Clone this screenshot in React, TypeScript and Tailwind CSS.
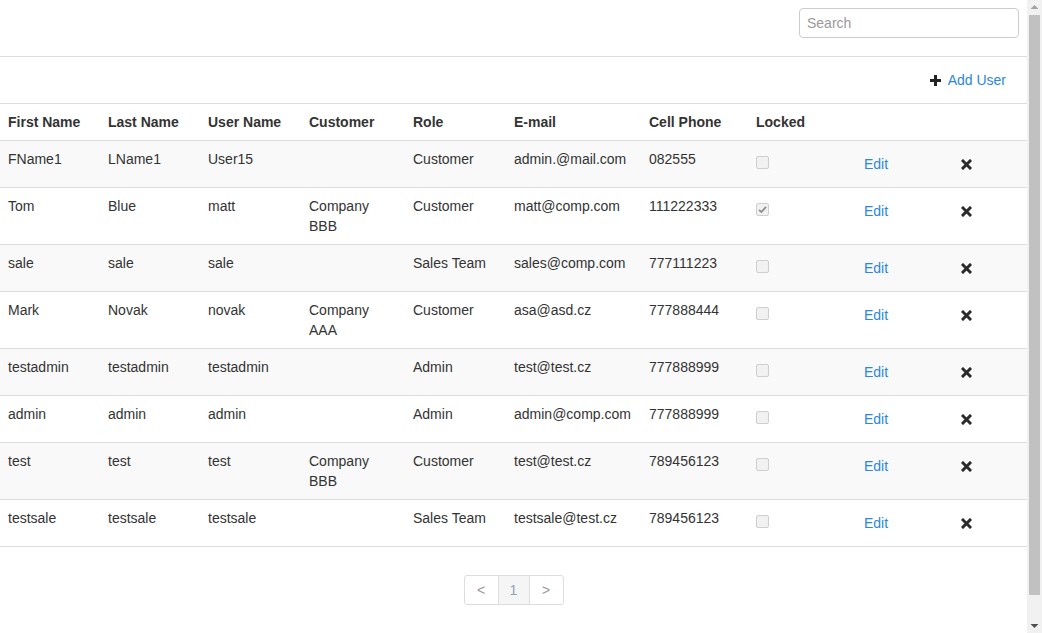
import React from "react";

type User = {
  first: string;
  last: string;
  user: string;
  customer: string;
  role: string;
  email: string;
  phone: string;
  locked: boolean;
};

const users: User[] = [
  { first: "FName1", last: "LName1", user: "User15", customer: "", role: "Customer", email: "admin.@mail.com", phone: "082555", locked: false },
  { first: "Tom", last: "Blue", user: "matt", customer: "Company BBB", role: "Customer", email: "matt@comp.com", phone: "111222333", locked: true },
  { first: "sale", last: "sale", user: "sale", customer: "", role: "Sales Team", email: "sales@comp.com", phone: "777111223", locked: false },
  { first: "Mark", last: "Novak", user: "novak", customer: "Company AAA", role: "Customer", email: "asa@asd.cz", phone: "777888444", locked: false },
  { first: "testadmin", last: "testadmin", user: "testadmin", customer: "", role: "Admin", email: "test@test.cz", phone: "777888999", locked: false },
  { first: "admin", last: "admin", user: "admin", customer: "", role: "Admin", email: "admin@comp.com", phone: "777888999", locked: false },
  { first: "test", last: "test", user: "test", customer: "Company BBB", role: "Customer", email: "test@test.cz", phone: "789456123", locked: false },
  { first: "testsale", last: "testsale", user: "testsale", customer: "", role: "Sales Team", email: "testsale@test.cz", phone: "789456123", locked: false },
];

const headers = ["First Name", "Last Name", "User Name", "Customer", "Role", "E-mail", "Cell Phone", "Locked", "", ""];

// Heavy "plus" like the old glyphicon
const PlusIcon = () => (
  <svg width="11" height="11" viewBox="0 0 11 11" className="block">
    <path d="M4 0h3v4h4v3H7v4H4V7H0V4h4z" fill="#222" />
  </svg>
);

// Heavy "remove" cross
const RemoveIcon = () => (
  <svg width="11" height="11" viewBox="0 0 11 11" className="block">
    <path d="M2 2L9 9M9 2L2 9" stroke="#2a2a2a" strokeWidth="3" strokeLinecap="square" />
  </svg>
);

const Checkbox = ({ checked }: { checked: boolean }) => (
  <span className="mt-[7px] flex h-[13px] w-[13px] items-center justify-center rounded-[2px] border border-[#cfcfcf] bg-[#f1f1f1]">
    {checked && (
      <svg width="9" height="9" viewBox="0 0 9 9">
        <path d="M1 4.8L3.4 7L8 1.8" stroke="#8c8c8c" strokeWidth="1.8" fill="none" />
      </svg>
    )}
  </span>
);

// Classic browser scrollbar drawn beside the page
const Scrollbar = () => (
  <div className="flex h-full w-[15px] shrink-0 flex-col items-center bg-[#f1f1f1]">
    <svg width="15" height="14" viewBox="0 0 15 14" className="block shrink-0">
      <path d="M3.5 9L7.5 5L11.5 9z" fill="#a3a3a3" />
    </svg>
    <div className="mt-[1px] h-[580px] w-[11px] bg-[#c1c1c1]" />
    <div className="flex-1" />
    <svg width="15" height="14" viewBox="0 0 15 14" className="block shrink-0">
      <path d="M3.5 5L7.5 9L11.5 5z" fill="#505050" />
    </svg>
  </div>
);

export default function App() {
  return (
    <div className="flex h-[633px] w-full overflow-hidden bg-white font-['Liberation_Sans',Arial,sans-serif] text-[14px] leading-[20px] text-[#333]">
      <div className="min-w-0 flex-1 pb-[53px]">
        {/* Top bar with search */}
        <div className="flex h-[57px] justify-end border-b border-[#ddd] pr-2 pt-2">
          <input
            type="text"
            placeholder="Search"
            className="h-[30px] w-[220px] rounded-[4px] border border-[#ccc] px-[7px] text-[14px] text-[#555] outline-none placeholder:text-[#999]"
          />
        </div>

        {/* Toolbar */}
        <div className="flex h-[46px] items-center justify-end pr-[21px]">
          <button className="flex items-center gap-[7px] text-[#2b88d9]">
            <PlusIcon />
            <span>Add User</span>
          </button>
        </div>

        {/* Users table */}
        <table className="w-full table-fixed border-collapse border-b border-[#ddd]">
          <colgroup>
            <col className="w-[100px]" />
            <col className="w-[100px]" />
            <col className="w-[101px]" />
            <col className="w-[104px]" />
            <col className="w-[101px]" />
            <col className="w-[135px]" />
            <col className="w-[107px]" />
            <col className="w-[98px]" />
            <col className="w-[95px]" />
            <col />
          </colgroup>
          <thead>
            <tr>
              {headers.map((h, i) => (
                <th key={i} className="border-t border-[#ddd] p-2 text-left align-top font-bold">
                  {h}
                </th>
              ))}
            </tr>
          </thead>
          <tbody>
            {users.map((u, i) => (
              <tr key={i} className={i % 2 === 0 ? "bg-[#f9f9f9]" : "bg-white"}>
                <td className="border-t border-[#ddd] p-2 align-top">{u.first}</td>
                <td className="border-t border-[#ddd] p-2 align-top">{u.last}</td>
                <td className="border-t border-[#ddd] p-2 align-top">{u.user}</td>
                <td className="border-t border-[#ddd] p-2 align-top">{u.customer}</td>
                <td className="border-t border-[#ddd] p-2 align-top">{u.role}</td>
                <td className="border-t border-[#ddd] p-2 align-top">{u.email}</td>
                <td className="border-t border-[#ddd] p-2 align-top">{u.phone}</td>
                <td className="border-t border-[#ddd] p-2 align-top">
                  <Checkbox checked={u.locked} />
                </td>
                <td className="border-t border-[#ddd] p-2 align-top">
                  <button className="h-[30px] px-[10px] text-[#2b88d9]">Edit</button>
                </td>
                <td className="border-t border-[#ddd] p-2 align-top">
                  <button className="flex h-[30px] items-center pl-[12px] pr-[10px]">
                    <RemoveIcon />
                  </button>
                </td>
              </tr>
            ))}
          </tbody>
        </table>

        {/* Pagination */}
        <div className="mt-[28px] flex justify-center">
          <div className="flex h-[30px] rounded-[3px] border border-[#ddd]">
            <span className="flex w-[33px] items-center justify-center text-[#999]">&lt;</span>
            <span className="flex w-[32px] items-center justify-center border-x border-[#ddd] bg-[#f5f5f5] text-[#8ea2b5]">1</span>
            <span className="flex w-[33px] items-center justify-center text-[#999]">&gt;</span>
          </div>
        </div>
      </div>
      <Scrollbar />
    </div>
  );
}
